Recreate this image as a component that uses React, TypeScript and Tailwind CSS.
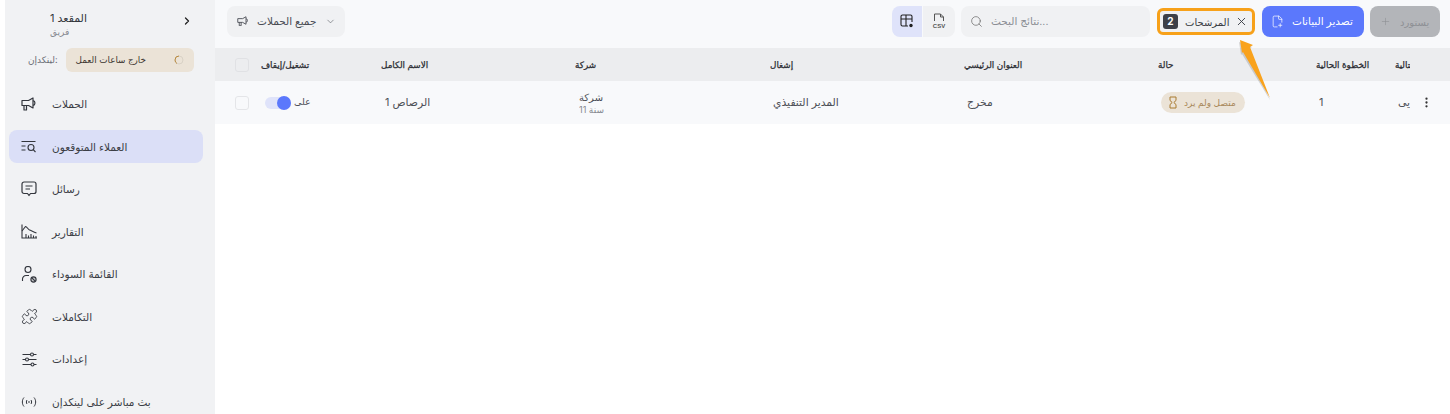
import React from "react";
import { ChevronDown, ChevronRight, Search, X, Plus, MoreVertical, FilePlus2, Puzzle } from "lucide-react";

const Nav = ({ icon, label, active = false }: { icon: React.ReactNode; label: string; active?: boolean }) => (
  <div className={`h-[33px] mb-[9.5px] rounded-lg flex items-center pl-[11px] gap-[14px] text-[10.5px] text-[#3a3d45] ${active ? "bg-[#dbdff7]" : ""}`}>
    <span className="w-[18px] h-[18px] flex items-center justify-center text-[#33363d]">{icon}</span>
    <span className="pt-[2px]">{label}</span>
  </div>
);

const MegaIcon = ({ s = 16 }: { s?: number }) => (
  <svg width={s} height={(s * 14) / 16} viewBox="0 0 16 14" fill="none" stroke="currentColor" strokeWidth="1.200" strokeLinejoin="round"><path d="M1 3.500h6.500L12 1v10L7.500 8.500H1z" /><path d="M12 3.800c2.500-.3 2.500 4.700 0 4.400" /><path d="M3 8.500V13h2.500V8.500" /></svg>
);
const LeadsIcon = () => (
  <svg width="16" height="14" viewBox="0 0 16 14" fill="none" stroke="currentColor" strokeWidth="1.100"><path d="M0.500 1.500h14M0.500 6h4M0.500 10h4" /><circle cx="10" cy="7.500" r="3" /><path d="M12.200 9.700 14.500 12" /></svg>
);
const MessageIcon = () => (
  <svg width="16" height="16" viewBox="0 0 16 16" fill="none" stroke="currentColor" strokeWidth="1.200" strokeLinejoin="round"><path d="M3 1h10a2 2 0 0 1 2 2v7.500a2 2 0 0 1-2 2H9.500L8 14.500 6.500 12.500H3a2 2 0 0 1-2-2V3a2 2 0 0 1 2-2z" /><path d="M4.500 5h7M4.500 8h4.500" /></svg>
);
const ChartIcon = () => (
  <svg width="16" height="15" viewBox="0 0 16 15" fill="none" stroke="currentColor" strokeWidth="1.100"><path d="M1 0.500v13.500h15" /><path d="M1 7 4.500 2.500c1.500 0 2.500 3 4 3.500s4 2 7 3" /><path d="M5 14v-4M7.500 14v-2.500M10 14v-4M12.500 14v-2.500M15 14v-2" /></svg>
);
const BlockUserIcon = () => (
  <svg width="16" height="17" viewBox="0 0 16 17" fill="none" stroke="currentColor" strokeWidth="1.100"><circle cx="7" cy="3.500" r="3" /><path d="M1.500 15v-2A3.500 3.500 0 0 1 5 9.500h3" /><circle cx="12.500" cy="13.500" r="2.600" fill="currentColor" fillOpacity=".25" /><path d="m10.700 11.700 3.600 3.600" /></svg>
);
const SlidersIcon = () => (
  <svg width="15" height="15" viewBox="0 0 15 15" fill="none" stroke="currentColor" strokeWidth="1.100"><path d="M0.500 2.500h8M11.500 2.500h3M0.500 7.500h3M6.500 7.500h8M0.500 12.500h8.500M12 12.500h2.500" /><circle cx="10" cy="2.500" r="1.500" /><circle cx="5" cy="7.500" r="1.500" /><circle cx="10.500" cy="12.500" r="1.500" /></svg>
);
const LiveIcon = () => (
  <svg width="16" height="12" viewBox="0 0 16 12" fill="none" stroke="currentColor" strokeWidth="1"><path d="M3 1.500C0.800 4 0.800 8 3 10.500M13 1.500c2.200 2.500 2.200 6.500 0 9" /><path d="M6 4c-.8 1.200-.8 2.800 0 4" /><path d="M10 4c.8 1.200.8 2.800 0 4" /><circle cx="8" cy="6" r=".4" /></svg>
);
const CsvIcon = () => (
  <svg width="14" height="16" viewBox="0 0 14 16" fill="none" stroke="currentColor" strokeWidth="1"><path d="M2.500 8V1h6l3 3v4" /><path d="M8.500 1v3h3" /><text x="7" y="14.500" textAnchor="middle" fontSize="6" fontWeight="700" fill="currentColor" stroke="none" fontFamily="Liberation Sans">CSV</text></svg>
);
const TableGearIcon = () => (
  <svg width="14" height="14" viewBox="0 0 14 14" fill="none" stroke="currentColor" strokeWidth="1.100"><path d="M8 12H2.500a1.500 1.500 0 0 1-1.500-1.500v-8A1.500 1.500 0 0 1 2.500 1h8A1.500 1.500 0 0 1 12 2.500V8" /><path d="M1 5h11M6 1v11" /><circle cx="11" cy="11.500" r="1.700" fill="currentColor" stroke="none" /></svg>
);
const SandIcon = () => (
  <svg width="8" height="13" viewBox="0 0 8 13" fill="none" stroke="#a87a30" strokeWidth="1" strokeLinejoin="round"><path d="M1 1h6v3.500L4.800 6.500 7 8.500V12H1V8.500L3.200 6.500 1 4.500z" /></svg>
);

const C = ({ w, t = false, children }: { w: string; t?: boolean; children?: React.ReactNode }) => (
  <div className={`${w} ${t ? "pt-[2px]" : ""} shrink-0 overflow-hidden whitespace-nowrap`}>{children}</div>
);

export default function App() {
  return (
    <div className="relative w-[1450px] h-[414px] overflow-hidden flex bg-white font-['Inter','Noto_Sans','DejaVu_Sans',sans-serif]">
      <aside className="w-[215px] shrink-0 pl-[5px] bg-white overflow-hidden">
        <div className="bg-[#f1f2f4] h-[414px] pl-[4px] pr-[12px] overflow-hidden">
          <div className="h-[48px] flex items-center pl-[41px] pr-[10px] justify-between">
            <div className="flex flex-col gap-[1px]">
              <span className="text-[11px] leading-[14px] text-[#33363d]">المقعد 1</span>
              <span className="text-[9px] leading-[12px] text-[#85888f]">فريق</span>
            </div>
            <ChevronRight size={12} strokeWidth={2.600} className="text-[#222] -mt-[6px]" />
          </div>
          <div className="h-[24px] flex items-center gap-[9px] pl-[19px]">
            <span className="text-[9px] text-[#6a6d74]">لينكدإن:</span>
            <div className="w-[128px] h-[24px] -ml-[1px] rounded-md bg-[#ebe3d7] flex items-center justify-between pl-[10px] pr-[10px] text-[8.800px] text-[#3c3530]">
              <span>خارج ساعات العمل</span>
              <svg width="10" height="10" viewBox="0 0 10 10" fill="none" strokeWidth="1"><circle cx="5" cy="5" r="4" stroke="#d9d2c6" /><path d="M5 1a4 4 0 0 0-4 4 4 4 0 0 0 2 3.500" stroke="#b98a3e" /></svg>
            </div>
          </div>
          <div className="mt-[15.500px]">
            <Nav icon={<MegaIcon />} label="الحملات" />
            <Nav active icon={<LeadsIcon />} label="العملاء المتوقعون" />
            <Nav icon={<MessageIcon />} label="رسائل" />
            <Nav icon={<ChartIcon />} label="التقارير" />
            <Nav icon={<BlockUserIcon />} label="القائمة السوداء" />
            <Nav icon={<Puzzle size={17} strokeWidth={1.200} />} label="التكاملات" />
            <Nav icon={<SlidersIcon />} label="إعدادات" />
            <Nav icon={<LiveIcon />} label="بث مباشر على لينكدإن" />
          </div>
        </div>
      </aside>

      <main className="flex-1 min-w-0">
        <header className="h-[48px] bg-[#f8f9fb] flex items-center pl-[12px] pr-[10px] pb-[6px]">
          <div className="w-[118px] h-[31px] rounded-lg bg-[#f0f1f3] flex items-center pl-[10px] gap-[8px] text-[10.500px] text-[#4a4d55]">
            <MegaIcon s={12} />
            <span className="pt-[2px]">جميع الحملات</span>
            <ChevronDown size={11} strokeWidth={1.200} className="ml-[1px]" />
          </div>
          <div className="flex-1" />
          <div className="flex h-[31px] rounded-lg overflow-hidden">
            <div className="w-[30px] bg-[#dfe3fa] flex items-center justify-center text-[#222]"><TableGearIcon /></div>
            <div className="w-[32px] ml-[1px] bg-[#f0f1f3] flex items-center justify-center text-[#555]"><CsvIcon /></div>
          </div>
          <div className="ml-[6px] w-[189px] h-[31px] rounded-lg bg-[#f0f1f3] flex items-center pl-[9px] gap-[8px] text-[10.500px] text-[#8b8e95]">
            <Search size={13} strokeWidth={1.300} className="text-[#666]" />
            <span className="pt-[2px]">نتائج البحث...</span>
          </div>
          <div className="ml-[7px] w-[98px] h-[27px] rounded-md border-[3px] border-[#f7a11a] bg-[#f0f1f3] flex items-center pl-[3px] text-[10px] text-[#3a3d45]">
            <span className="w-[15px] h-[15px] shrink-0 rounded-[3px] bg-[#3d4048] text-white text-[10px] font-bold flex items-center justify-center">2</span>
            <span className="ml-[7px] w-[48px] whitespace-nowrap pt-[2px]">المرشحات</span>
            <X size={13} strokeWidth={1.700} className="ml-[2px] shrink-0" />
          </div>
          <div className="ml-[7px] w-[102px] h-[31px] rounded-lg bg-[#5b78fc] flex items-center pl-[9px] gap-[8px] text-[10.500px] text-white">
            <FilePlus2 size={13} strokeWidth={1.300} />
            <span className="pt-[2px]">تصدير البيانات</span>
          </div>
          <div className="ml-[6px] w-[70px] h-[31px] rounded-lg bg-[#b3b5b9] flex items-center pl-[10px] gap-[9px] text-[10px] text-[#8e9095]">
            <Plus size={11} strokeWidth={1.300} />
            <span className="pt-[2px]">يستورد</span>
          </div>
        </header>

        <div className="h-[33px] bg-[#ecedef] flex items-center text-[8.800px] font-normal text-[#2a2c32] [-webkit-text-stroke:0.25px_#2a2c32]">
          <C w="w-[46px]"><span className="block ml-[20px] w-[14px] h-[14px] rounded-[3px] border border-[#e0e1e4]" /></C>
          <C w="w-[120px]">تشغيل/إيقاف</C>
          <C w="w-[194px]">الاسم الكامل</C>
          <C w="w-[195px]">شركة</C>
          <C w="w-[194px]">إشغال</C>
          <C w="w-[194px]">العنوان الرئيسي</C>
          <C w="w-[158px]">حالة</C>
          <C w="w-[79px]">الخطوة الحالية</C>
          <C w="w-[15px]">الخطوة التالية</C>
        </div>

        <div className="h-[43px] bg-[#f8f9fb] flex items-center text-[10.800px] text-[#4d5057]">
          <C w="w-[50px]"><span className="block ml-[20px] w-[14px] h-[14px] rounded-[3px] border border-[#e4e5e8]" /></C>
          <C w="w-[120px]">
            <div className="flex items-center gap-[3px] h-[16px]">
              <span className="relative block w-[26px] h-[12px] rounded-full bg-[#dfe3fa]"><span className="absolute right-0 -top-[1px] w-[14px] h-[14px] rounded-full bg-[#5b78fc]" /></span>
              <span className="text-[9.500px]">على</span>
            </div>
          </C>
          <C w="w-[194px]" t>الرصاص 1</C>
          <C w="w-[194px]">
            <div className="flex flex-col"><span className="text-[10px] leading-[14px]">شركة</span><span className="text-[9px] leading-[12px] text-[#85888f]">سنة 11</span></div>
          </C>
          <C w="w-[194px]" t>المدير التنفيذي</C>
          <C w="w-[194px]" t>مخرج</C>
          <C w="w-[158px]">
            <span className="inline-flex items-center w-[84px] h-[21px] rounded-full bg-[#ebe3d7] pl-[8px] gap-[7px] text-[9px] text-[#a8885a] align-middle">
              <SandIcon />
              <span>متصل ولم يرد</span>
            </span>
          </C>
          <C w="w-[79px]" t>1</C>
          <C w="w-[12px]" t>يى</C>
          <MoreVertical size={13} strokeWidth={2.200} className="ml-[10px] text-[#333]" />
        </div>
      </main>

      <svg className="absolute left-[1235px] top-[38px]" width="40" height="64" viewBox="0 0 40 64">
        <path d="M5 3 L18 8 L15 10 L36 61 L8 15 L7 16 Z" fill="#8a8a8a" fillOpacity=".35" transform="translate(-1 1)" />
        <path d="M5 2 L18 7 L15 9 L35 60 L8 14 L7 15 Z" fill="#f9a21c" />
      </svg>
    </div>
  );
}
